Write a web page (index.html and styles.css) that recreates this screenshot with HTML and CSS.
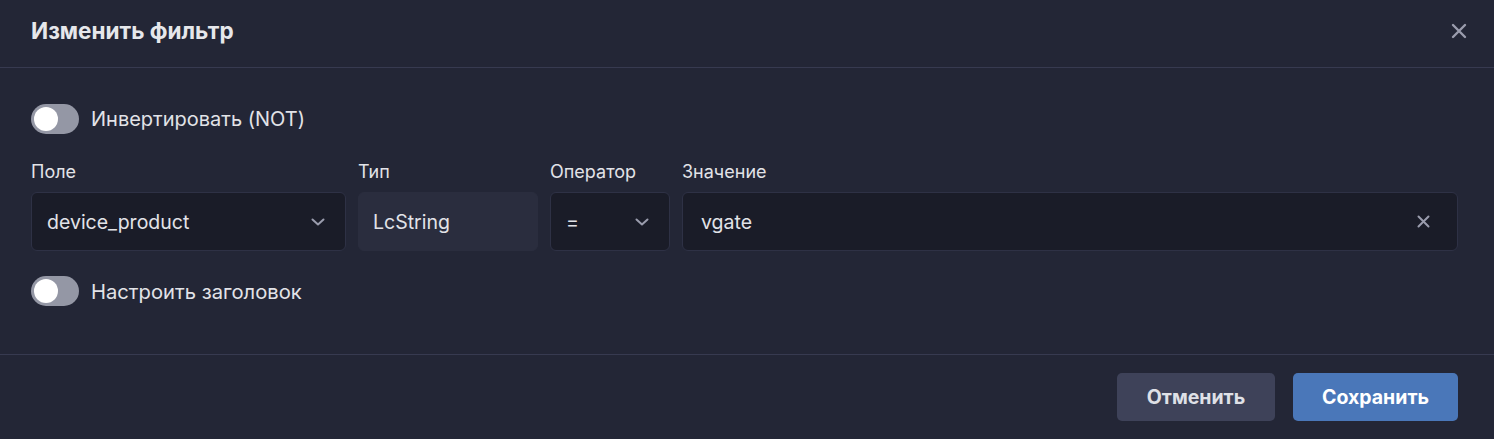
FILE: index.html
```html
<!DOCTYPE html>
<html lang="ru">
<head>
<meta charset="utf-8">
<title>Изменить фильтр</title>
<link rel="stylesheet" href="styles.css">
</head>
<body>
<div class="modal">
  <div class="header">
    <div class="title">Изменить фильтр</div>
    <button class="close" aria-label="Закрыть">
      <svg width="16" height="16" viewBox="0 0 16 16"><path d="M2 2L14 14M14 2L2 14" stroke="#9a9cad" stroke-width="2.4" stroke-linecap="round"/></svg>
    </button>
  </div>
  <div class="body">
    <label class="toggle-row">
      <span class="toggle"><span class="knob"></span></span>
      <span class="toggle-label">Инвертировать (NOT)</span>
    </label>
    <div class="fields">
      <div class="field f-field">
        <div class="label">Поле</div>
        <div class="input select">
          <span class="value">device_product</span>
          <svg class="chev" width="14" height="8" viewBox="0 0 14 8"><path d="M1.5 1.5L7 6.5L12.5 1.5" fill="none" stroke="#9a9cad" stroke-width="2" stroke-linecap="round" stroke-linejoin="round"/></svg>
        </div>
      </div>
      <div class="field f-type">
        <div class="label">Тип</div>
        <div class="input readonly"><span class="value">LcString</span></div>
      </div>
      <div class="field f-op">
        <div class="label">Оператор</div>
        <div class="input select op">
          <span class="value">=</span>
          <svg class="chev" width="14" height="8" viewBox="0 0 14 8"><path d="M1.5 1.5L7 6.5L12.5 1.5" fill="none" stroke="#9a9cad" stroke-width="2" stroke-linecap="round" stroke-linejoin="round"/></svg>
        </div>
      </div>
      <div class="field f-value">
        <div class="label">Значение</div>
        <div class="input text">
          <span class="value">vgate</span>
          <svg class="clear" width="13" height="13" viewBox="0 0 13 13"><path d="M1.5 1.5L11.5 11.5M11.5 1.5L1.5 11.5" stroke="#9a9cad" stroke-width="2" stroke-linecap="round"/></svg>
        </div>
      </div>
    </div>
    <label class="toggle-row second">
      <span class="toggle"><span class="knob"></span></span>
      <span class="toggle-label">Настроить заголовок</span>
    </label>
  </div>
  <div class="footer">
    <button class="btn cancel">Отменить</button>
    <button class="btn save">Сохранить</button>
  </div>
</div>
</body>
</html>
```
FILE: styles.css
```css
* { box-sizing: border-box; }
html, body { margin: 0; padding: 0; }
body {
  background: #232636;
  font-family: Inter, "Noto Sans", sans-serif;
  color: #e2e3e8;
  width: 1494px;
  height: 439px;
  overflow: hidden;
}
.modal { width: 1494px; height: 439px; background: #232636; }
.header {
  height: 68px;
  display: flex;
  align-items: center;
  justify-content: space-between;
  padding: 0 27px 6px 31px;
  border-bottom: 1px solid #373a50;
}
.title { font-size: 22.5px; font-weight: 700; color: #e6e7eb; }
.close {
  background: none; border: 0; padding: 0; margin: 0;
  width: 16px; height: 16px; display: flex; cursor: pointer;
}
.body { padding: 36px 36px 48px 31px; }
.toggle-row { display: flex; align-items: center; gap: 12px; height: 30px; }
.toggle-row.second { margin-top: 25px; }
.toggle {
  width: 48px; height: 30px; border-radius: 15px;
  background: #9497a5; display: flex; align-items: center; padding: 0 3px;
}
.knob { width: 24px; height: 24px; border-radius: 50%; background: #ffffff; }
.toggle-label { font-size: 20px; color: #e2e3e8; }
.second .toggle-label { font-size: 20.2px; }
.fields { display: flex; gap: 12px; margin-top: 28px; }
.field { display: flex; flex-direction: column; gap: 10px; }
.f-field { width: 315px; }
.f-type { width: 180px; }
.f-op { width: 120px; }
.f-value { flex: 1; }
.label { font-size: 18px; line-height: 20px; color: #e2e3e8; }
.input {
  height: 59px;
  border-radius: 6px;
  border: 1px solid #2e3145;
  background: #1a1c28;
  display: flex;
  align-items: center;
  padding: 0 20px 0 15px;
  font-size: 19.5px;
  color: #e2e3e8;
}
.input .value { flex: 1; }
.readonly { background: #2a2d3e; border-color: #2a2d3e; padding-left: 14px; }
.op { padding-left: 15px; }
.text { padding: 0 27px 0 18px; }
.chev { flex: none; }
.clear { flex: none; }
.footer {
  display: flex;
  justify-content: flex-end;
  gap: 18px;
  padding: 18px 36px 18px;
  border-top: 1px solid #373a50;
}
.btn {
  height: 48px; border: 0; border-radius: 5px;
  font-family: Inter, "Noto Sans", sans-serif;
  font-size: 19.5px; font-weight: 700; cursor: pointer;
}
.cancel { width: 158px; background: #3e4259; color: #dfe0e6; }
.save { width: 165px; background: #4a77b9; color: #ffffff; }
```
